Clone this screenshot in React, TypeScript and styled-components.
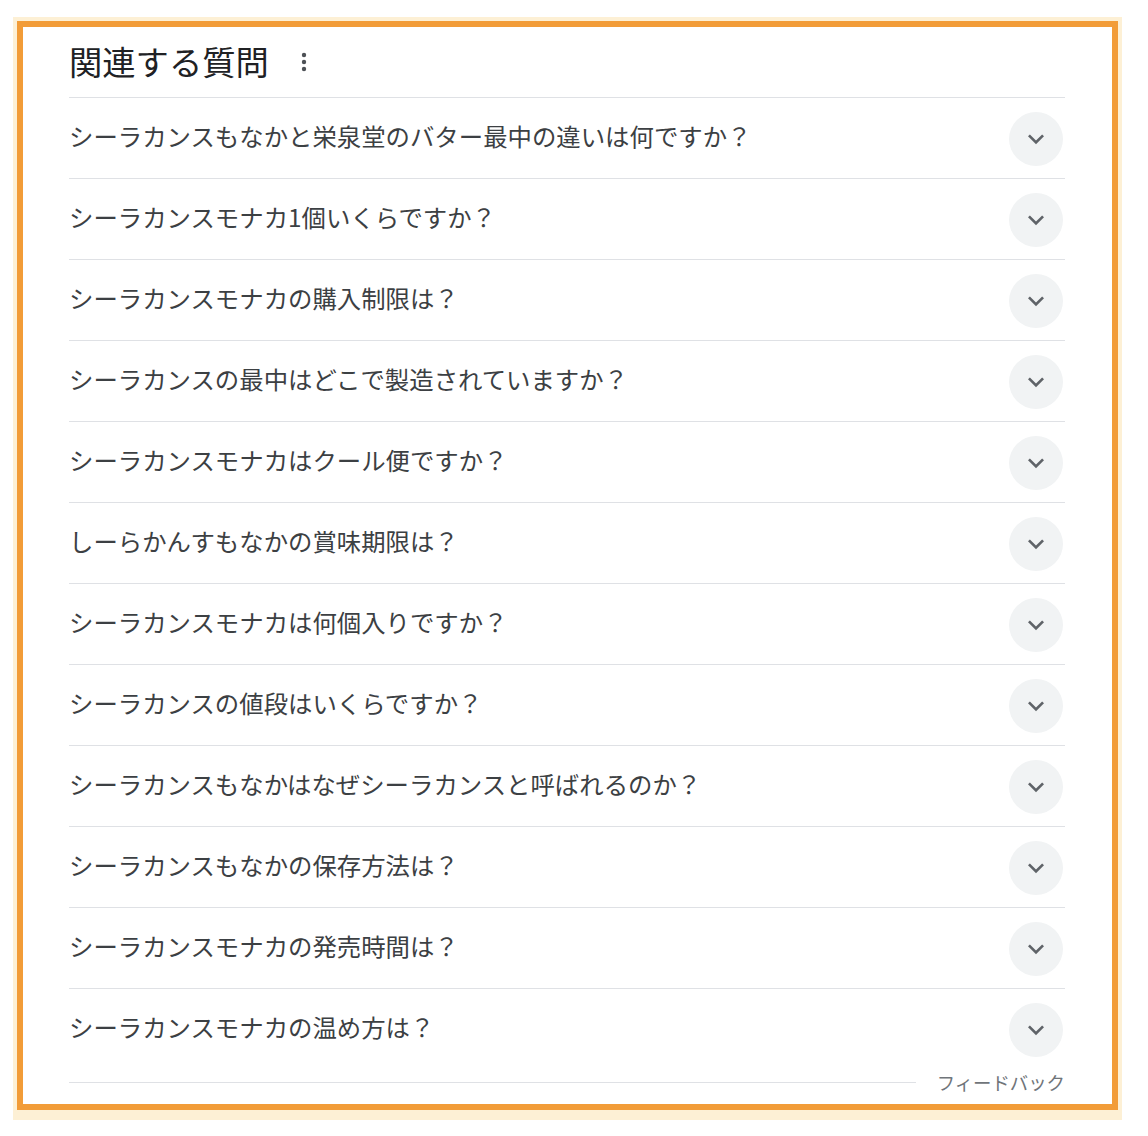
import React from "react";
import styled, { createGlobalStyle } from "styled-components";

const GlobalStyle = createGlobalStyle`
  html, body {
    margin: 0;
    padding: 0;
    background: #ffffff;
    font-family: "Noto Sans CJK JP", "Noto Sans", sans-serif;
  }
  * { box-sizing: border-box; }
`;

const Frame = styled.div`
  margin: 17px 0 0 13px;
  width: 1109px;
  padding: 4px 4px 10px 4px;
  background: #fdf0d5;
`;

const Card = styled.section`
  border: 6px solid #f29c38;
  background: #ffffff;
  padding: 0 47px 9px 46px;
`;

const Header = styled.div`
  height: 70px;
  display: flex;
  align-items: center;
  gap: 25px;
  padding-bottom: 3px;
`;

const Title = styled.h2`
  margin: 0;
  font-size: 33.3px;
  font-weight: 400;
  color: #202124;
  line-height: 1;
`;

const MenuButton = styled.span`
  display: flex;
  align-items: center;
  justify-content: center;
  width: 20px;
  height: 24px;
  margin-top: 3px;
  color: #4d5156;
`;

const Row = styled.div`
  height: 81px;
  border-top: 1px solid #dfe1e5;
  display: flex;
  align-items: center;
  justify-content: space-between;
`;

const Question = styled.span`
  font-size: 24.4px;
  color: #3c4043;
  line-height: 1;
  margin-bottom: 3px;
`;

const ExpandCircle = styled.span`
  width: 54px;
  height: 54px;
  border-radius: 50%;
  background: #f1f3f4;
  display: flex;
  align-items: center;
  justify-content: center;
  color: #5f6368;
  margin: 1px 2px 0 0;
`;

const FeedbackRow = styled.div`
  height: 26px;
  display: flex;
  align-items: center;
  gap: 21px;
`;

const FeedbackLine = styled.div`
  flex: 1;
  height: 1px;
  background: #dfe1e5;
`;

const FeedbackText = styled.span`
  font-size: 18.4px;
  color: #70757a;
  line-height: 1;
`;

const questions = [
  "シーラカンスもなかと栄泉堂のバター最中の違いは何ですか？",
  "シーラカンスモナカ1個いくらですか？",
  "シーラカンスモナカの購入制限は？",
  "シーラカンスの最中はどこで製造されていますか？",
  "シーラカンスモナカはクール便ですか？",
  "しーらかんすもなかの賞味期限は？",
  "シーラカンスモナカは何個入りですか？",
  "シーラカンスの値段はいくらですか？",
  "シーラカンスもなかはなぜシーラカンスと呼ばれるのか？",
  "シーラカンスもなかの保存方法は？",
  "シーラカンスモナカの発売時間は？",
  "シーラカンスモナカの温め方は？",
];

const Kebab = () => (
  <svg width="8" height="20" viewBox="0 0 8 20" fill="currentColor">
    <circle cx="4" cy="3" r="2.2" />
    <circle cx="4" cy="10" r="2.2" />
    <circle cx="4" cy="17" r="2.2" />
  </svg>
);

const Chevron = () => (
  <svg width="32" height="32" viewBox="0 0 24 24" fill="currentColor">
    <path d="M16.59 8.59L12 13.17 7.41 8.59 6 10l6 6 6-6z" />
  </svg>
);

export default function App() {
  return (
    <>
      <GlobalStyle />
      <Frame>
        <Card>
          <Header>
            <Title>関連する質問</Title>
            <MenuButton>
              <Kebab />
            </MenuButton>
          </Header>
          {questions.map((q) => (
            <Row key={q}>
              <Question>{q}</Question>
              <ExpandCircle>
                <Chevron />
              </ExpandCircle>
            </Row>
          ))}
          <FeedbackRow>
            <FeedbackLine />
            <FeedbackText>フィードバック</FeedbackText>
          </FeedbackRow>
        </Card>
      </Frame>
    </>
  );
}
